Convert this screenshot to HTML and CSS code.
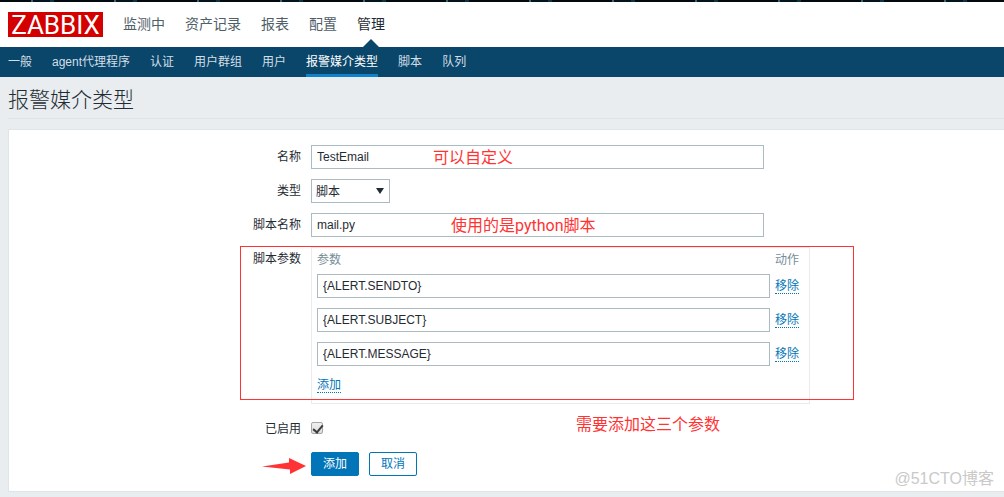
FILE: index.html
```html
<!DOCTYPE html>
<html lang="zh-CN">
<head>
<meta charset="utf-8">
<title>报警媒介类型</title>
<link rel="stylesheet" href="styles.css">
</head>
<body>
<div class="backdrop"></div>
<header class="top">
  <a class="logo" href="#">ZABBIX</a>
  <nav class="main-nav">
    <a href="#">监测中</a>
    <a href="#">资产记录</a>
    <a href="#">报表</a>
    <a href="#">配置</a>
    <a href="#" class="selected">管理</a>
  </nav>
</header>
<nav class="sub-nav">
  <a href="#">一般</a>
  <a href="#">agent代理程序</a>
  <a href="#">认证</a>
  <a href="#">用户群组</a>
  <a href="#">用户</a>
  <a href="#" class="selected">报警媒介类型</a>
  <a href="#">脚本</a>
  <a href="#">队列</a>
</nav>
<main class="page">
  <h1 class="title">报警媒介类型</h1>
  <form class="panel">
    <label class="label" for="name">名称</label>
    <div class="field"><input class="text" id="name" type="text" value="TestEmail"></div>

    <label class="label" for="type">类型</label>
    <div class="field"><span class="select-wrap"><select class="select" id="type"><option>脚本</option></select></span></div>

    <label class="label" for="script">脚本名称</label>
    <div class="field"><input class="text" id="script" type="text" value="mail.py"></div>

    <span class="label">脚本参数</span>
    <div class="field">
      <div class="params">
        <table class="params-table">
          <thead><tr><th>参数</th><th>动作</th></tr></thead>
          <tbody>
            <tr><td><input class="text" type="text" aria-label="参数 1" value="{ALERT.SENDTO}"></td><td><a class="link" href="#">移除</a></td></tr>
            <tr><td><input class="text" type="text" aria-label="参数 2" value="{ALERT.SUBJECT}"></td><td><a class="link" href="#">移除</a></td></tr>
            <tr><td><input class="text" type="text" aria-label="参数 3" value="{ALERT.MESSAGE}"></td><td><a class="link" href="#">移除</a></td></tr>
            <tr class="add-row"><td colspan="2"><a class="link" href="#">添加</a></td></tr>
          </tbody>
        </table>
      </div>
    </div>

    <label class="label check-label" for="enabled">已启用</label>
    <div class="field check-field"><input class="check" id="enabled" type="checkbox" checked></div>

    <div class="buttons">
      <button class="btn" type="button">添加</button>
      <button class="btn btn-alt" type="button">取消</button>
    </div>

    <div class="note-frame"></div>
    <span class="note note-name">可以自定义</span>
    <span class="note note-script">使用的是python脚本</span>
    <span class="note note-params">需要添加这三个参数</span>
    <svg class="note-arrow" width="44" height="16" viewBox="0 0 44 16" aria-hidden="true"><path d="M0 8.5 27 4.5V0L44 8 28 16V11.5Z" fill="#ff3333"/></svg>
    <span class="watermark">@51CTO博客</span>
  </form>
</main>
</body>
</html>
```
FILE: styles.css
```css
* {
  box-sizing: border-box;
}

body {
  margin: 0;
  min-height: 100vh;
  background: #e9edf0;
  color: #1f2c33;
  font: 12px/24px "Liberation Sans", "Noto Sans CJK SC", sans-serif;
}

a {
  text-decoration: none;
}

.backdrop {
  height: 2px;
  background: repeating-linear-gradient(90deg, #02090f 0 31px, #3c6472 31px 33px, #04141f 33px 50px, #0c3444 50px 54px, #02090f 54px 83px);
}

.top {
  display: flex;
  align-items: center;
  gap: 20px;
  height: 45px;
  padding: 0 8px;
  background: #fff;
}

.logo {
  width: 95px;
  height: 25px;
  background: #d40000;
  color: #fff;
  font: 26px/26px Roboto, sans-serif;
  text-align: center;
}

.main-nav {
  display: flex;
  gap: 20px;
  align-self: stretch;
}

.main-nav a {
  position: relative;
  color: #4f5e68;
  font-size: 14px;
  line-height: 44px;
}

.main-nav .selected {
  color: #1f2c33;
}

.main-nav .selected::after {
  content: "";
  position: absolute;
  left: calc(50% - 8px);
  bottom: 0;
  border: solid transparent;
  border-width: 0 8px 8px;
  border-bottom-color: #0a466a;
}

.sub-nav {
  display: flex;
  gap: 20px;
  height: 30px;
  padding: 0 8px;
  background: #0a466a;
}

.sub-nav a {
  height: 30px;
  color: #d3dfe6;
  line-height: 30px;
}

.sub-nav .selected {
  color: #fff;
  border-bottom: 3px solid #0f82cc;
}

.page {
  padding: 0 0 5px 8px;
}

.title {
  margin: 0 0 10px;
  height: 42px;
  border-bottom: 1px solid #dfe4e7;
  font-size: 21px;
  font-weight: 300;
  line-height: 45px;
}

.panel {
  position: relative;
  display: grid;
  grid-template-columns: 292px 1fr;
  column-gap: 10px;
  row-gap: 10px;
  padding: 15px 0;
  background: #fff;
  border: 1px solid #dfe4e7;
  border-right: 0;
}

.label {
  text-align: right;
}

.field {
  display: flex;
}

.text,
.select {
  height: 24px;
  border: 1px solid #acbbc2;
  border-radius: 0;
  background: #fff;
  color: #1f2c33;
  font: inherit;
  line-height: 22px;
}

.text {
  display: block;
  width: 453px;
  padding: 0 5px;
}

.select-wrap {
  position: relative;
  display: flex;
}

.select {
  width: 79px;
  padding: 1px 4px 0;
  appearance: none;
}

.select-wrap::after {
  content: "";
  position: absolute;
  top: 9px;
  right: 6px;
  border: solid transparent;
  border-width: 6px 4px 0;
  border-top-color: #1f2c33;
  pointer-events: none;
}

.params {
  width: 499px;
  padding: 0 5px 5px;
  border: 1px solid #e9ebed;
}

.params-table {
  border-collapse: collapse;
}

.params-table th {
  height: 21px;
  padding: 4px 0 0;
  color: #768d99;
  font-weight: 400;
  line-height: 17px;
  text-align: left;
  vertical-align: bottom;
}

.params-table td {
  padding: 5px 5px 5px 0;
}

.params-table .add-row td {
  height: 27px;
  padding: 0;
}

.link {
  display: inline-block;
  color: #0275b8;
  line-height: 13px;
  border-bottom: 1px dotted #0275b8;
}

.check-label {
  line-height: 30px;
}

.check-field {
  align-items: center;
  height: 28px;
}

.check {
  appearance: none;
  width: 12px;
  height: 12px;
  margin: 0;
  border: 1px solid #a6a6a6;
  border-radius: 2px;
  background: linear-gradient(#f0f0f0, #dedede);
}

.check:checked::after {
  content: "";
  display: block;
  width: 4px;
  height: 8px;
  margin: 0 0 0 3px;
  border: solid #3c3c3c;
  border-width: 0 2px 2px 0;
  transform: rotate(40deg);
}

.check-label {
  height: 28px;
}

.buttons {
  grid-column: 2;
  display: flex;
  gap: 10px;
}

.btn {
  height: 24px;
  padding: 0 11px;
  border: 1px solid #0275b8;
  border-radius: 2px;
  background: #0275b8;
  color: #fff;
  font: inherit;
  line-height: 22px;
}

.btn-alt {
  background: #fff;
  color: #0275b8;
}

.note-frame {
  position: absolute;
  left: 231px;
  top: 116px;
  width: 614px;
  height: 154px;
  border: 1px solid #f33;
  pointer-events: none;
}

.note {
  position: absolute;
  color: #f33;
  font: 16px/24px Roboto, "Noto Sans CJK SC", sans-serif;
  white-space: nowrap;
}

.note-name {
  left: 424px;
  top: 16px;
}

.note-script {
  left: 442px;
  top: 84px;
}

.note-params {
  left: 567px;
  top: 283px;
}

.note-arrow {
  position: absolute;
  left: 253px;
  top: 328px;
}

.watermark {
  position: absolute;
  right: 10px;
  bottom: 0;
  color: #c9c9c9;
  font-size: 16px;
}
```
